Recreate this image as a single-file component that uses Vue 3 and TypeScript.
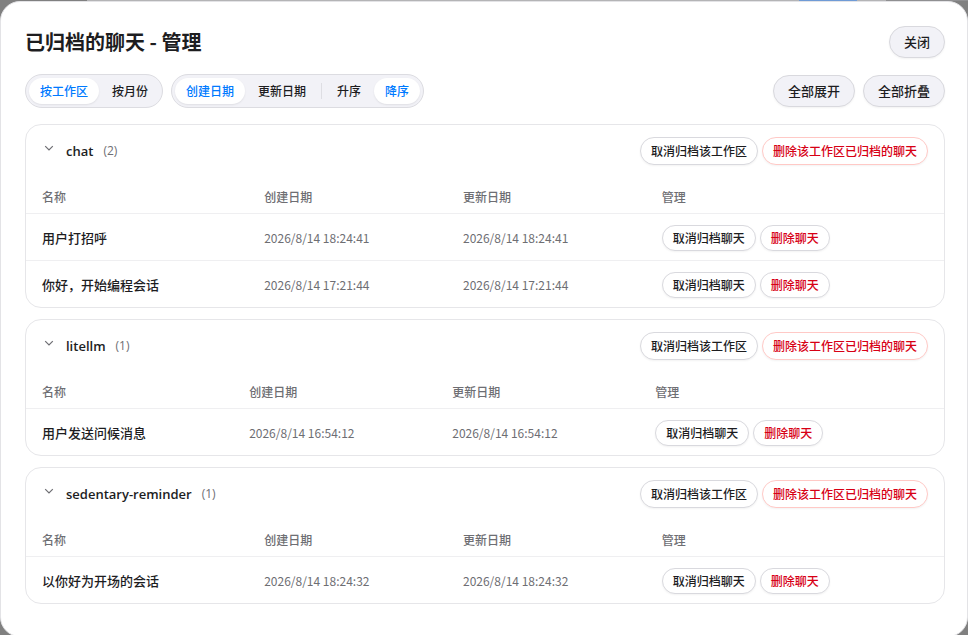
<script setup lang="ts">
import { computed, ref } from 'vue'

type GroupBy = 'workspace' | 'month'
type SortKey = 'created' | 'updated'
type SortOrder = 'asc' | 'desc'

interface Chat {
  name: string
  created: string
  updated: string
}

interface Workspace {
  name: string
  open: boolean
  chats: Chat[]
}

const groupBy = ref<GroupBy>('workspace')
const sortKey = ref<SortKey>('created')
const sortOrder = ref<SortOrder>('desc')

const groupOptions: { value: GroupBy; label: string }[] = [
  { value: 'workspace', label: '按工作区' },
  { value: 'month', label: '按月份' },
]
const keyOptions: { value: SortKey; label: string }[] = [
  { value: 'created', label: '创建日期' },
  { value: 'updated', label: '更新日期' },
]
const orderOptions: { value: SortOrder; label: string }[] = [
  { value: 'asc', label: '升序' },
  { value: 'desc', label: '降序' },
]

const workspaces = ref<Workspace[]>([
  {
    name: 'chat',
    open: true,
    chats: [
      { name: '用户打招呼', created: '2026/8/14 18:24:41', updated: '2026/8/14 18:24:41' },
      { name: '你好，开始编程会话', created: '2026/8/14 17:21:44', updated: '2026/8/14 17:21:44' },
    ],
  },
  {
    name: 'litellm',
    open: true,
    chats: [{ name: '用户发送问候消息', created: '2026/8/14 16:54:12', updated: '2026/8/14 16:54:12' }],
  },
  {
    name: 'sedentary-reminder',
    open: true,
    chats: [{ name: '以你好为开场的会话', created: '2026/8/14 18:24:32', updated: '2026/8/14 18:24:32' }],
  },
])

const sorted = computed(() =>
  workspaces.value.map((w) => ({
    source: w,
    chats: [...w.chats].sort((a, b) => {
      const d = a[sortKey.value].localeCompare(b[sortKey.value])
      return sortOrder.value === 'asc' ? d : -d
    }),
  })),
)

function setAll(open: boolean) {
  workspaces.value.forEach((w) => (w.open = open))
}
</script>

<template>
  <div class="backdrop">
    <div class="behind" aria-hidden="true"></div>
    <main class="dialog" role="dialog" aria-labelledby="dialog-title">
      <header class="head">
        <h1 id="dialog-title">已归档的聊天 - 管理</h1>
        <button type="button" class="btn">关闭</button>
      </header>

      <div class="toolbar">
        <div class="segments" role="group">
          <button
            v-for="o in groupOptions"
            :key="o.value"
            type="button"
            class="seg"
            :class="{ active: groupBy === o.value }"
            :aria-pressed="groupBy === o.value"
            @click="groupBy = o.value"
          >{{ o.label }}</button>
        </div>
        <div class="segments" role="group">
          <button
            v-for="o in keyOptions"
            :key="o.value"
            type="button"
            class="seg"
            :class="{ active: sortKey === o.value }"
            :aria-pressed="sortKey === o.value"
            @click="sortKey = o.value"
          >{{ o.label }}</button>
          <span class="divider"></span>
          <button
            v-for="o in orderOptions"
            :key="o.value"
            type="button"
            class="seg"
            :class="{ active: sortOrder === o.value }"
            :aria-pressed="sortOrder === o.value"
            @click="sortOrder = o.value"
          >{{ o.label }}</button>
        </div>
        <div class="bulk">
          <button type="button" class="btn" @click="setAll(true)">全部展开</button>
          <button type="button" class="btn" @click="setAll(false)">全部折叠</button>
        </div>
      </div>

      <div class="list">
        <section v-for="g in sorted" :key="g.source.name" class="card">
          <div class="card-head">
            <button
              type="button"
              class="toggle"
              :aria-expanded="g.source.open"
              @click="g.source.open = !g.source.open"
            >
              <svg class="chevron" :class="{ closed: !g.source.open }" viewBox="0 0 14 14" aria-hidden="true">
                <path d="M3.2 5.2 7 9l3.8-3.8" />
              </svg>
              <span class="name">{{ g.source.name }}</span>
              <span class="count">({{ g.chats.length }})</span>
            </button>
            <div class="actions">
              <button type="button" class="small">取消归档该工作区</button>
              <button type="button" class="small danger tinted">删除该工作区已归档的聊天</button>
            </div>
          </div>
          <table v-if="g.source.open">
            <thead>
              <tr>
                <th scope="col">名称</th>
                <th scope="col">创建日期</th>
                <th scope="col">更新日期</th>
                <th scope="col">管理</th>
              </tr>
            </thead>
            <tbody>
              <tr v-for="c in g.chats" :key="c.name">
                <td class="title">{{ c.name }}</td>
                <td class="date">{{ c.created }}</td>
                <td class="date">{{ c.updated }}</td>
                <td>
                  <div class="actions">
                    <button type="button" class="small row">取消归档聊天</button>
                    <button type="button" class="small row danger">删除聊天</button>
                  </div>
                </td>
              </tr>
            </tbody>
          </table>
        </section>
      </div>
    </main>
  </div>
</template>

<style>
body {
  margin: 0;
  background: #808080;
}
</style>

<style scoped>
.backdrop {
  box-sizing: border-box;
  height: 100vh;
  overflow: hidden;
  background: #808080;
  color: #1d1d1f;
  font-family: 'Noto Sans CJK SC', sans-serif;
  font-size: 13px;
}

.behind {
  height: 1px;
  background: linear-gradient(
    to right,
    #808080 0 9%,
    #b4b4b6 9% 82.5%,
    #6f9bd6 82.5% 88.5%,
    #b4b4b6 88.5% 91.5%,
    #8f8f91 91.5%
  );
}

.dialog {
  box-sizing: border-box;
  min-height: calc(100vh + 1px);
  padding: 24px 22px 24px 24px;
  border: 1px solid #e3e3e6;
  border-radius: 20px;
  background: #fff;
}

button {
  margin: 0;
  font: inherit;
  color: inherit;
  cursor: pointer;
  white-space: nowrap;
}

.head {
  display: flex;
  align-items: center;
  justify-content: space-between;
}

h1 {
  margin: 0;
  font-size: 20px;
  font-weight: 600;
  line-height: 32px;
}

.btn {
  box-sizing: border-box;
  height: 32px;
  padding: 0 14px;
  border: 1px solid #d9d9de;
  border-radius: 16px;
  background: #f2f2f7;
  box-shadow: 0 1px 2px rgba(0, 0, 0, 0.05);
  font-weight: 500;
  line-height: 20px;
}

.toolbar {
  display: flex;
  align-items: center;
  gap: 8px;
  margin: 16px 0;
}

.segments {
  display: flex;
  align-items: center;
  gap: 2px;
  padding: 3px;
  border: 1px solid #dcdce1;
  border-radius: 17px;
  background: #f2f2f7;
}

.seg {
  height: 26px;
  padding: 0 11px;
  border: 0;
  border-radius: 13px;
  background: transparent;
  font-size: 12px;
  font-weight: 500;
  line-height: 18px;
}

.seg.active {
  background: #fff;
  color: #007aff;
  box-shadow: 0 1px 2px rgba(0, 0, 0, 0.08);
}

.divider {
  width: 1px;
  height: 16px;
  margin: 0 2px;
  background: #dedee3;
}

.bulk {
  display: flex;
  gap: 8px;
  margin-left: auto;
}

.list {
  display: grid;
  gap: 11px;
}

.card {
  border: 1px solid #e6e6e9;
  border-radius: 16px;
  background: #fff;
  overflow: hidden;
}

.card-head {
  display: flex;
  align-items: center;
  justify-content: space-between;
  padding: 12px 16px;
}

.toggle {
  display: flex;
  align-items: center;
  gap: 10px;
  padding: 0;
  border: 0;
  background: none;
  font-family: 'Open Sans', 'Noto Sans CJK SC', sans-serif;
  line-height: 20px;
}

.chevron {
  width: 14px;
  height: 14px;
  margin-bottom: 6px;
  fill: none;
  stroke: #6e6e73;
  stroke-width: 1.2;
}

.chevron.closed {
  transform: rotate(-90deg);
}

.name {
  font-weight: 600;
}

.count {
  color: #6e6e73;
  font-size: 12px;
}

.actions {
  display: flex;
  gap: 4px;
}

.small {
  box-sizing: border-box;
  height: 28px;
  padding: 0 10px;
  border: 1px solid #d9d9de;
  border-radius: 14px;
  background: #fff;
  box-shadow: 0 1px 2px rgba(0, 0, 0, 0.05);
  font-size: 12px;
  font-weight: 500;
  line-height: 18px;
}

.small.row {
  height: 26px;
}

.danger {
  color: #d70015;
}

.tinted {
  border-color: #ffc9c6;
}

table {
  width: 100%;
  border-collapse: collapse;
}

th {
  padding: 11px 16px 7px;
  color: #6e6e73;
  font-size: 12px;
  font-weight: 500;
  line-height: 18px;
  text-align: left;
}

td {
  padding: 11px 16px 9px;
  border-top: 1px solid #efeff1;
  line-height: 18px;
  white-space: nowrap;
}

.title {
  font-weight: 500;
}

.date {
  padding-right: 12px;
  color: #6e6e73;
  font-size: 12px;
}
</style>
